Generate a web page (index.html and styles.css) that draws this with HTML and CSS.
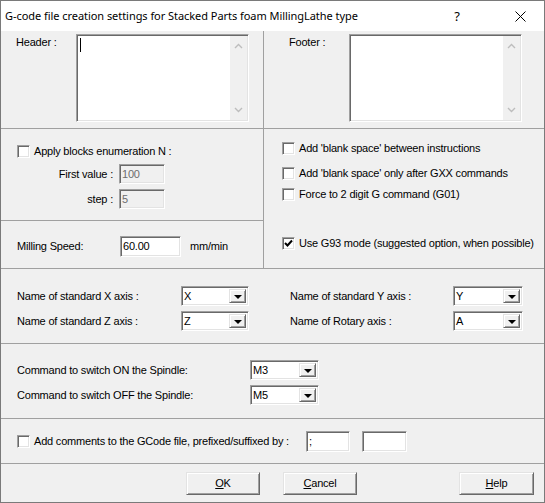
FILE: index.html
```html
<!DOCTYPE html>
<html>
<head>
<meta charset="utf-8">
<link rel="stylesheet" href="styles.css">
</head>
<body>
<div class="window">
  <div class="titlebar">
    <span class="title">G-code file creation settings for Stacked Parts foam MillingLathe type</span>
    <span class="cap cap-help">?</span>
    <span class="cap cap-close"><svg width="11" height="11" viewBox="0 0 11 11"><path d="M0.5 0.5 L10.5 10.5 M10.5 0.5 L0.5 10.5" stroke="#000" stroke-width="1" fill="none"/></svg></span>
  </div>
  <div class="body">
    <div class="upper">
      <div class="col col-left">
        <div class="sec sec-memo sec-header">
          <span class="memo-label">Header :</span>
          <div class="memo">
            <div class="memo-text"><span class="caret"></span></div>
            <div class="vscroll">
              <svg width="9" height="6" viewBox="0 0 9 6"><path d="M1 5 L4.5 1.5 L8 5" stroke="#bdbdbd" stroke-width="1.4" fill="none"/></svg>
              <svg width="9" height="6" viewBox="0 0 9 6"><path d="M1 1 L4.5 4.5 L8 1" stroke="#bdbdbd" stroke-width="1.4" fill="none"/></svg>
            </div>
          </div>
        </div>
        <div class="sec sec-enum">
          <div class="chk-row">
            <span class="chk"></span><span>Apply blocks enumeration N :</span>
          </div>
          <div class="field-row first">
            <span class="field-label">First value :</span>
            <span class="edit disabled small">100</span>
          </div>
          <div class="field-row">
            <span class="field-label">step :</span>
            <span class="edit disabled small">5</span>
          </div>
        </div>
        <div class="sec sec-speed">
          <span class="speed-label">Milling Speed:</span>
          <span class="edit speed">60.00</span>
          <span class="unit">mm/min</span>
        </div>
      </div>
      <div class="col col-right">
        <div class="sec sec-memo sec-footer">
          <span class="memo-label">Footer :</span>
          <div class="memo">
            <div class="memo-text"></div>
            <div class="vscroll">
              <svg width="9" height="6" viewBox="0 0 9 6"><path d="M1 5 L4.5 1.5 L8 5" stroke="#bdbdbd" stroke-width="1.4" fill="none"/></svg>
              <svg width="9" height="6" viewBox="0 0 9 6"><path d="M1 1 L4.5 4.5 L8 1" stroke="#bdbdbd" stroke-width="1.4" fill="none"/></svg>
            </div>
          </div>
        </div>
        <div class="sec sec-checks">
          <div class="chk-row r1"><span class="chk"></span><span>Add 'blank space' between instructions</span></div>
          <div class="chk-row r2"><span class="chk"></span><span>Add 'blank space' only after GXX commands</span></div>
          <div class="chk-row r3"><span class="chk"></span><span>Force to 2 digit G command (G01)</span></div>
          <div class="chk-row r4"><span class="chk checked"><svg width="9" height="9" viewBox="0 0 9 9"><path d="M1 4 L3.5 6.5 L8 1.5" stroke="#000" stroke-width="2" fill="none"/></svg></span><span>Use G93 mode (suggested option, when possible)</span></div>
        </div>
      </div>
    </div>
    <div class="sec sec-axes">
      <span class="axis-label">Name of standard X axis :</span>
      <div class="combo"><span class="combo-val">X</span><span class="drop"><i></i></span></div>
      <span class="axis-label gap">Name of standard Y axis :</span>
      <div class="combo"><span class="combo-val">Y</span><span class="drop"><i></i></span></div>
      <span class="axis-label">Name of standard Z axis :</span>
      <div class="combo"><span class="combo-val">Z</span><span class="drop"><i></i></span></div>
      <span class="axis-label gap">Name of Rotary axis :</span>
      <div class="combo"><span class="combo-val">A</span><span class="drop"><i></i></span></div>
    </div>
    <div class="sec sec-spindle">
      <span class="sp-label">Command to switch ON the Spindle:</span>
      <div class="combo"><span class="combo-val">M3</span><span class="drop"><i></i></span></div>
      <span class="sp-label">Command to switch OFF the Spindle:</span>
      <div class="combo"><span class="combo-val">M5</span><span class="drop"><i></i></span></div>
    </div>
    <div class="sec sec-comments">
      <span class="chk"></span>
      <span class="comment-text">Add comments to the GCode file, prefixed/suffixed by :</span>
      <span class="edit c1">;</span>
      <span class="edit c2"></span>
    </div>
    <div class="sec sec-buttons">
      <span class="btn b-ok"><u>O</u>K</span>
      <span class="btn b-cancel"><u>C</u>ancel</span>
      <span class="btn b-help"><u>H</u>elp</span>
    </div>
  </div>
</div>
</body>
</html>
```
FILE: styles.css
```css
* { box-sizing: border-box; }
html, body { margin: 0; padding: 0; background: #ffffff; }
body {
  font-family: "Liberation Sans", Arial, sans-serif;
  font-size: 11px;
  line-height: 13px;
  letter-spacing: -0.2px;
  color: #000;
}
.window {
  width: 545px;
  height: 503px;
  border: 1px solid #7a7a7a;
  background: #f0f0f0;
  display: flex;
  flex-direction: column;
}
.titlebar {
  height: 30px;
  flex: none;
  background: #ffffff;
  display: flex;
  align-items: center;
}
.title {
  flex: 1;
  padding-left: 4px;
  font-family: "Noto Sans", "Open Sans", sans-serif;
  font-size: 11px;
  letter-spacing: -0.05px;
  line-height: 16px;
  color: #000;
  white-space: nowrap;
}
.cap {
  display: flex;
  align-items: center;
  justify-content: center;
  height: 30px;
}
.cap-help {
  width: 46px;
  margin-right: 16px;
  font-family: "Noto Sans", sans-serif;
  font-size: 13px;
  letter-spacing: 0;
}
.cap-close { width: 48px; }

.body { flex: 1; display: flex; flex-direction: column; }
.sec { border-bottom: 1px solid #a0a0a0; }

.upper { display: flex; height: 238px; flex: none; border-bottom: 1px solid #a0a0a0; }
.col { display: flex; flex-direction: column; }
.col-left { width: 263px; border-right: 1px solid #a0a0a0; }
.col-right { flex: 1; }
.col .sec:last-child { border-bottom: none; }

.sec-memo { height: 98px; display: flex; align-items: flex-start; padding-top: 3px; }
.sec-header { padding-left: 15px; }
.sec-footer { padding-left: 25px; }
.memo-label { width: 60px; margin-top: 2px; }
.memo {
  width: 173px;
  height: 88px;
  display: flex;
  background: #fff;
  border: 1px solid;
  border-color: #a0a0a0 #ffffff #ffffff #a0a0a0;
  box-shadow: inset 1px 1px 0 #696969, inset -1px -1px 0 #e3e3e3;
  padding: 1px;
}
.memo-text { flex: 1; }
.caret {
  display: block;
  width: 1px;
  height: 14px;
  background: #000;
  margin: 2px 0 0 2px;
}
.vscroll {
  width: 17px;
  background: #f0f0f0;
  display: flex;
  flex-direction: column;
  justify-content: space-between;
  align-items: center;
  padding: 7px 0 7px;
}

.chk {
  width: 13px;
  height: 13px;
  flex: none;
  background: #fff;
  border: 1px solid;
  border-color: #a0a0a0 #ffffff #ffffff #a0a0a0;
  box-shadow: inset 1px 1px 0 #696969, inset -1px -1px 0 #e3e3e3;
  display: flex;
  align-items: center;
  justify-content: center;
}
.chk-row { display: flex; align-items: center; gap: 4px; height: 13px; }

.sec-enum { height: 92px; padding: 16px 0 0 16px; }
.field-row { display: flex; align-items: center; margin-top: 5px; }
.field-row.first { margin-top: 6px; }
.field-label { width: 96px; text-align: right; margin-right: 6px; }

.edit {
  display: block;
  height: 21px;
  background: #fff;
  border: 1px solid;
  border-color: #a0a0a0 #ffffff #ffffff #a0a0a0;
  box-shadow: inset 1px 1px 0 #696969, inset -1px -1px 0 #e3e3e3;
  padding: 3px 0 0 2px;
  white-space: nowrap;
}
.edit.disabled { background: #f0f0f0; color: #6d6d6d; }
.edit.small { width: 46px; height: 20px; }

.sec-speed { flex: 1; display: flex; align-items: flex-start; padding: 15px 0 0 16px; }
.speed-label { width: 103px; margin-top: 4px; }
.edit.speed { width: 61px; }
.unit { margin-left: 9px; margin-top: 4px; }

.sec-checks { flex: 1; padding: 13px 0 0 18px; }
.sec-checks .r2 { margin-top: 12px; }
.sec-checks .r3 { margin-top: 8px; }
.sec-checks .r4 { margin-top: 36px; }

.combo {
  height: 20px;
  display: flex;
  background: #fff;
  border: 1px solid;
  border-color: #a0a0a0 #ffffff #ffffff #a0a0a0;
  box-shadow: inset 1px 1px 0 #696969, inset -1px -1px 0 #e3e3e3;
  padding: 2px;
}
.combo-val { flex: 1; line-height: 14px; }
.drop {
  width: 17px;
  background: #f0f0f0;
  border: 1px solid;
  border-color: #e3e3e3 #696969 #696969 #e3e3e3;
  box-shadow: inset 1px 1px 0 #ffffff, inset -1px -1px 0 #a0a0a0;
  display: flex;
  align-items: center;
  justify-content: center;
}
.drop i {
  width: 0; height: 0;
  border-left: 4px solid transparent;
  border-right: 4px solid transparent;
  border-top: 4px solid #000;
  margin-top: 1px;
}

.sec-axes {
  height: 75px;
  flex: none;
  display: grid;
  grid-template-columns: 164px 68px 204px 70px;
  row-gap: 5px;
  align-items: center;
  align-content: start;
  padding: 17px 0 0 16px;
}
.sec-axes .gap { margin-left: 41px; }

.sec-spindle {
  height: 75px;
  flex: none;
  display: grid;
  grid-template-columns: 233px 69px;
  row-gap: 5px;
  align-items: center;
  align-content: start;
  padding: 16px 0 0 16px;
}

.sec-comments {
  height: 45px;
  flex: none;
  display: flex;
  align-items: center;
  padding: 0 0 0 16px;
}
.comment-text { width: 272px; margin-left: 4px; }
.edit.c1 { width: 44px; }
.edit.c2 { width: 45px; margin-left: 12px; }

.sec-buttons {
  flex: 1;
  border-bottom: none;
  display: flex;
  align-items: flex-start;
  padding: 8px 0 0 185px;
}
.btn {
  display: flex;
  align-items: center;
  justify-content: center;
  width: 74px;
  height: 23px;
  background: #f0f0f0;
  border: 1px solid;
  border-color: #e3e3e3 #696969 #696969 #e3e3e3;
  box-shadow: inset 1px 1px 0 #ffffff, inset -1px -1px 0 #a0a0a0;
}
.b-cancel { margin-left: 23px; }
.b-help { margin-left: 102px; width: 75px; }
```
